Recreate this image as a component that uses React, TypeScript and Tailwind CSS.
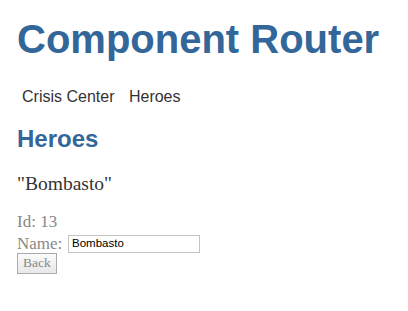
import { useState } from "react";

export default function App() {
  const [name, setName] = useState("Bombasto");

  return (
    <div className="min-h-[311px] bg-white pl-[17px] pt-[17px] text-[#888] font-['Liberation_Serif',Georgia,serif]">
      <h1 className="text-[40px] leading-[45px] font-bold text-[#369] font-['Liberation_Sans',Arial,sans-serif]">
        Component Router
      </h1>

      <nav className="mt-[26px] text-base leading-[18px] text-[#333] font-['Liberation_Sans',Arial,sans-serif]">
        <a href="#" className="px-[5px]">Crisis Center</a>{" "}
        <a href="#" className="px-[5px]">Heroes</a>
      </nav>

      <h2 className="mt-[19px] text-2xl leading-[27px] font-bold text-[#369] font-['Liberation_Sans',Arial,sans-serif]">
        Heroes
      </h2>

      <div>
        <h3 className="mt-[21px] text-[19.5px] leading-[22px] text-[#333]">"{name}"</h3>

        <div className="mt-[17px] text-[17px] leading-[19px]">
          <label>Id: </label>13
        </div>
        <div className="mt-[3px] text-[17px] leading-[19px] flex items-center">
          <label className="w-[51px]">Name: </label>
          <input
            value={name}
            onChange={(e) => setName(e.target.value)}
            placeholder="name"
            className="w-[132px] h-[18px] border border-[#c4c4c4] px-[3px] text-[11.5px] text-black font-['Liberation_Sans',Arial,sans-serif] outline-none"
          />
        </div>
        <p className="-mt-[3px]">
          <button className="h-[21px] px-[5px] border border-[#aaa] bg-gradient-to-b from-[#fbfbfb] to-[#e8e8e8] text-[13.5px] leading-[16px] text-[#888]">
            Back
          </button>
        </p>
      </div>
    </div>
  );
}
